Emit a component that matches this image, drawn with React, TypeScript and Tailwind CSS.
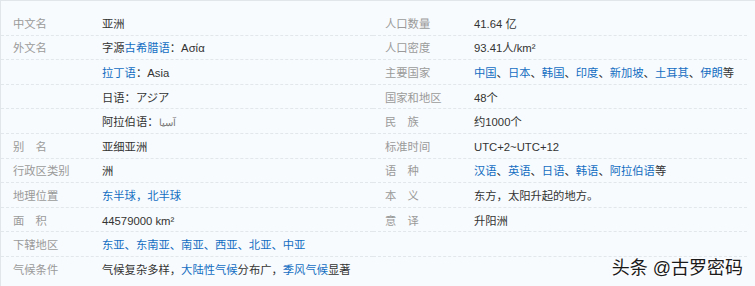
import type { ReactNode } from "react";

type Row = { label?: string; value?: ReactNode };

const L = ({ children }: { children: ReactNode }) => <span className="text-[#136ec2]">{children}</span>;

const LEFT: Row[] = [
  { label: "中文名", value: "亚洲" },
  { label: "外文名", value: <>字源<L>古希腊语</L>：Aσία</> },
  { value: <><L>拉丁语</L>：Asia</> },
  { value: "日语：アジア" },
  { value: <>阿拉伯语：<span dir="rtl" className="text-[10px] text-[#777]">آسيا</span></> },
  { label: "别\u3000名", value: "亚细亚洲" },
  { label: "行政区类别", value: "洲" },
  { label: "地理位置", value: <L>东半球，北半球</L> },
  { label: "面\u3000积", value: "44579000 km²" },
  { label: "下辖地区", value: <L>东亚、东南亚、南亚、西亚、北亚、中亚</L> },
  { label: "气候条件", value: <>气候复杂多样，<L>大陆性气候</L>分布广，<L>季风气候</L>显著</> },
];

const RIGHT: Row[] = [
  { label: "人口数量", value: "41.64 亿" },
  { label: "人口密度", value: "93.41人/km²" },
  { label: "主要国家", value: <><L>中国</L>、<L>日本</L>、<L>韩国</L>、<L>印度</L>、<L>新加坡</L>、<L>土耳其</L>、<L>伊朗</L>等</> },
  { label: "国家和地区", value: "48个" },
  { label: "民\u3000族", value: "约1000个" },
  { label: "标准时间", value: "UTC+2~UTC+12" },
  { label: "语\u3000种", value: <><L>汉语</L>、<L>英语</L>、<L>日语</L>、<L>韩语</L>、<L>阿拉伯语</L>等</> },
  { label: "本\u3000义", value: "东方，太阳升起的地方。" },
  { label: "意\u3000译", value: "升阳洲" },
  {},
];

function Column({ rows, width, last }: { rows: Row[]; width: string; last: boolean }) {
  return (
    <div className={width}>
      {rows.map((r, i) => (
        <div
          key={i}
          className={`h-[24.6px] flex items-center pl-3 pt-[3px] ${
            i === rows.length - 1 && !last ? "" : "border-b border-dashed border-[#e2e7eb]"
          }`}
        >
          <div className="w-[89px] shrink-0 text-[#9a9a9a]">{r.label}</div>
          <div className="text-[#333] whitespace-nowrap">{r.value}</div>
        </div>
      ))}
    </div>
  );
}

export default function App() {
  return (
    <div
      className="relative w-[755px] h-[286px] overflow-hidden bg-[#f8fbfd] border-t border-l border-[#e1e6ea] text-[11.3px]"
      style={{ fontFamily: '"Liberation Sans", "Noto Sans CJK SC", sans-serif' }}
    >
      <div className="flex pt-[10px]">
        <Column rows={LEFT} width="w-[372px]" last={false} />
        <Column rows={RIGHT} width="w-[374px]" last={true} />
      </div>
      <div
        className="absolute right-[12px] bottom-[7px] text-[18px] leading-[22px] text-[#1a1a1a]"
        style={{ textShadow: "0 0 2px #fff, 0 0 2px #fff, 1px 1px 1px #fff" }}
      >
        头条 @古罗密码
      </div>
    </div>
  );
}
